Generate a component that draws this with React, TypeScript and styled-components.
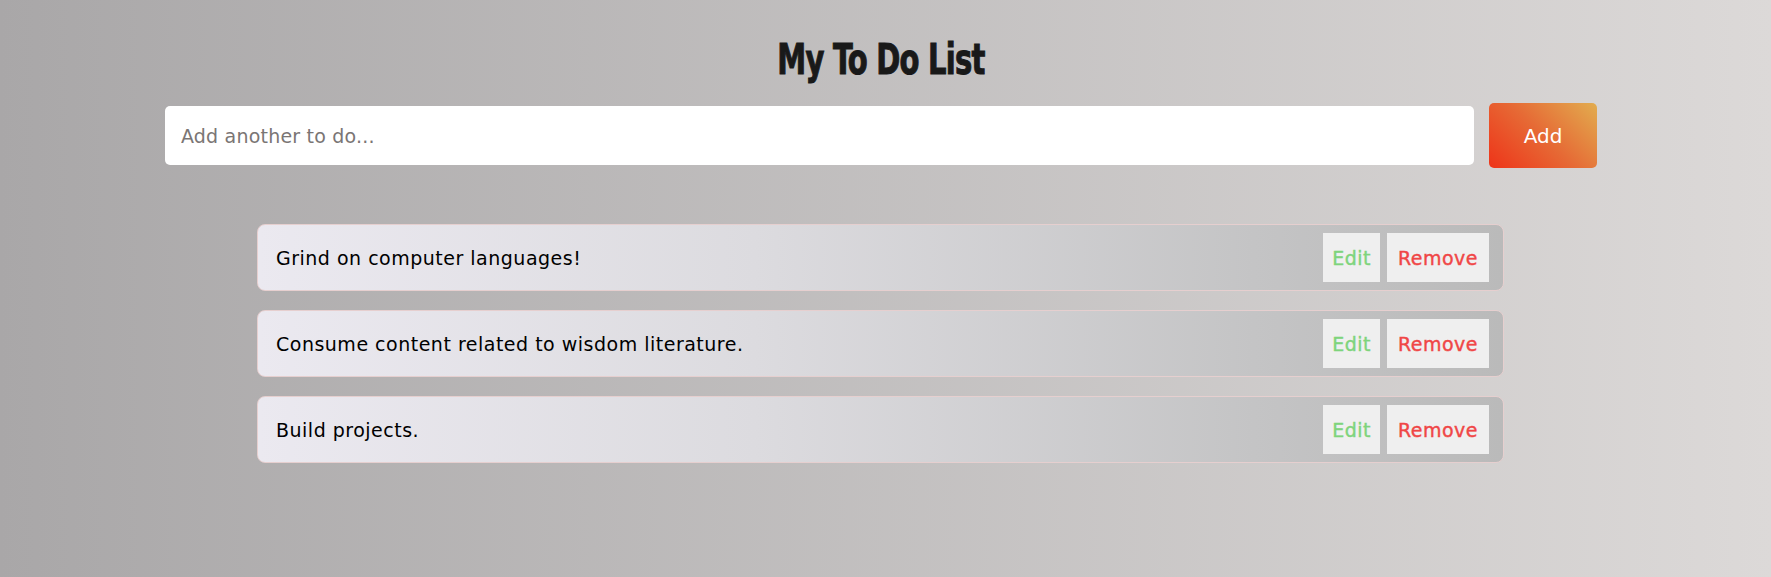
import React from "react";
import styled, { createGlobalStyle } from "styled-components";

const GlobalStyle = createGlobalStyle`
  html, body { margin: 0; padding: 0; }
  body {
    min-height: 577px;
    background: linear-gradient(to right, #a9a7a8 0%, #dcd9d8 100%);
    font-family: "DejaVu Sans", sans-serif;
  }
`;

const Page = styled.main`
  box-sizing: border-box;
  width: 100%;
  min-height: 577px;
  padding: 32px 174px 0 165px;
  display: flex;
  flex-direction: column;
`;

const Title = styled.h1`
  margin: 0;
  height: 54px;
  text-align: center;
  font-family: "DejaVu Sans Condensed", "Liberation Sans", sans-serif;
  font-weight: 700;
  font-size: 43px;
  line-height: 54px;
  letter-spacing: -1px;
  color: #191919;
  -webkit-text-stroke: 1px #191919;
  transform: scaleX(0.75);
`;

const Form = styled.form`
  display: flex;
  align-items: center;
  gap: 15px;
  margin-top: 17px;
`;

const Input = styled.input`
  flex: 1;
  box-sizing: border-box;
  height: 59px;
  border: none;
  border-radius: 5px;
  background: #ffffff;
  padding: 0 16px;
  font-family: "DejaVu Sans", sans-serif;
  font-size: 19px;
  letter-spacing: 0.2px;
  color: #222;
  outline: none;
  &::placeholder { color: #7a7574; }
`;

const AddButton = styled.button`
  width: 108px;
  height: 65px;
  border: none;
  border-radius: 5px;
  background: linear-gradient(225deg, #e2ad4f 0%, #e66a35 50%, #ee3419 100%);
  color: #ffffff;
  font-family: "DejaVu Sans", sans-serif;
  font-size: 20px;
  cursor: pointer;
`;

const List = styled.ul`
  list-style: none;
  margin: 56px 93px 0 92px;
  padding: 0;
  display: flex;
  flex-direction: column;
  gap: 19px;
`;

const Row = styled.li`
  box-sizing: border-box;
  height: 67px;
  display: flex;
  align-items: center;
  padding: 0 14px 0 18px;
  border: 1px solid #e6cfcf;
  border-radius: 8px;
  background: linear-gradient(to right, #ebe9f0 0%, #dcdbdf 40%, #c4c4c5 80%, #bababa 100%);
`;

const TaskText = styled.span`
  flex: 1;
  font-family: "DejaVu Sans", sans-serif;
  font-size: 19px;
  letter-spacing: 0.5px;
  color: #000000;
`;

const Actions = styled.div`
  display: flex;
  gap: 7px;
`;

const ActionButton = styled.button<{ $tone: "edit" | "remove" }>`
  height: 49px;
  padding: 0 9px;
  min-width: ${(p) => (p.$tone === "edit" ? "50px" : "102px")};
  border: none;
  background: #efefef;
  font-family: "DejaVu Sans", sans-serif;
  font-size: 19px;
  font-weight: 400;
  letter-spacing: 0.5px;
  -webkit-text-stroke: 0.4px currentColor;
  color: ${(p) => (p.$tone === "edit" ? "#7ed47c" : "#f04646")};
  cursor: pointer;
`;

const todos = [
  "Grind on computer languages!",
  "Consume content related to wisdom literature.",
  "Build projects.",
];

export default function App() {
  return (
    <>
      <GlobalStyle />
      <Page>
        <Title>My To Do List</Title>
        <Form onSubmit={(e) => e.preventDefault()}>
          <Input placeholder="Add another to do..." />
          <AddButton type="submit">Add</AddButton>
        </Form>
        <List>
          {todos.map((t) => (
            <Row key={t}>
              <TaskText>{t}</TaskText>
              <Actions>
                <ActionButton $tone="edit">Edit</ActionButton>
                <ActionButton $tone="remove">Remove</ActionButton>
              </Actions>
            </Row>
          ))}
        </List>
      </Page>
    </>
  );
}
